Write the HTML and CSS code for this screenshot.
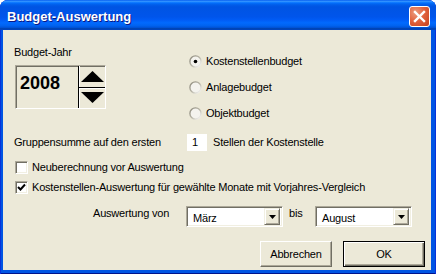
FILE: index.html
```html
<!DOCTYPE html>
<html lang="de">
<head>
<meta charset="utf-8">
<title>Budget-Auswertung</title>
<link rel="stylesheet" href="styles.css">
</head>
<body>
<div class="window">
  <div class="titlebar">
    <span class="title">Budget-Auswertung</span>
    <span class="close" aria-label="Schließen">
      <svg width="13" height="13" viewBox="0 0 13 13"><path d="M2 2 L11 11 M11 2 L2 11" stroke="#fff" stroke-width="2.4" stroke-linecap="square"/></svg>
    </span>
  </div>
  <div class="client">
    <div class="top">
      <div class="year">
        <div class="label">Budget-Jahr</div>
        <div class="spin">
          <div class="spin-value">2008</div>
          <div class="spin-btns">
            <div class="spin-btn"><svg width="23" height="11" viewBox="0 0 23 11"><polygon points="0,11 23,11 11.5,0" fill="#000"/></svg></div>
            <div class="spin-btn"><svg width="23" height="11" viewBox="0 0 23 11"><polygon points="0,0 23,0 11.5,11" fill="#000"/></svg></div>
          </div>
        </div>
      </div>
      <div class="radios">
        <div class="radio-row">
          <span class="radio"><svg width="13" height="13" viewBox="0 0 13 13"><defs><linearGradient id="rg" x1="0" y1="0" x2="1" y2="1"><stop offset="0" stop-color="#8a877a"/><stop offset="0.5" stop-color="#b7b4a6"/><stop offset="1" stop-color="#ffffff"/></linearGradient></defs><circle cx="6.5" cy="6.5" r="5.6" fill="#f4f3ee" stroke="url(#rg)" stroke-width="1.4"/><circle cx="6.5" cy="6.5" r="1.8" fill="#000"/></svg></span>
          <span>Kostenstellenbudget</span>
        </div>
        <div class="radio-row">
          <span class="radio"><svg width="13" height="13" viewBox="0 0 13 13"><circle cx="6.5" cy="6.5" r="5.6" fill="#f4f3ee" stroke="url(#rg)" stroke-width="1.4"/></svg></span>
          <span>Anlagebudget</span>
        </div>
        <div class="radio-row">
          <span class="radio"><svg width="13" height="13" viewBox="0 0 13 13"><circle cx="6.5" cy="6.5" r="5.6" fill="#f4f3ee" stroke="url(#rg)" stroke-width="1.4"/></svg></span>
          <span>Objektbudget</span>
        </div>
      </div>
    </div>
    <div class="group-row">
      <span class="group-label">Gruppensumme auf den ersten</span>
      <span class="field">1</span>
      <span>Stellen der Kostenstelle</span>
    </div>
    <div class="check-row first">
      <span class="check"></span>
      <span>Neuberechnung vor Auswertung</span>
    </div>
    <div class="check-row">
      <span class="check"><svg width="9" height="9" viewBox="0 0 9 9"><path d="M1 4 L3.5 6.5 L8 1.5" fill="none" stroke="#000" stroke-width="2"/></svg></span>
      <span>Kostenstellen-Auswertung für gewählte Monate mit Vorjahres-Vergleich</span>
    </div>
    <div class="range-row">
      <span class="range-label">Auswertung von</span>
      <div class="combo">
        <span class="combo-text">März</span>
        <span class="combo-btn"><svg width="7" height="4" viewBox="0 0 7 4"><polygon points="0,0 7,0 3.5,4" fill="#000"/></svg></span>
      </div>
      <span class="bis">bis</span>
      <div class="combo">
        <span class="combo-text">August</span>
        <span class="combo-btn"><svg width="7" height="4" viewBox="0 0 7 4"><polygon points="0,0 7,0 3.5,4" fill="#000"/></svg></span>
      </div>
    </div>
    <div class="buttons">
      <span class="btn cancel">Abbrechen</span>
      <span class="btn ok">OK</span>
    </div>
  </div>
</div>
</body>
</html>
```
FILE: styles.css
```css
html, body {
  margin: 0;
  padding: 0;
  background: #ffffff;
}

body {
  width: 436px;
  height: 274px;
  overflow: hidden;
  font-family: "Liberation Sans", Arial, sans-serif;
  font-size: 11px;
  letter-spacing: -0.2px;
  color: #000;
}

.window {
  width: 436px;
  height: 274px;
  display: flex;
  flex-direction: column;
  background: #0054e3;
  border-radius: 8px 8px 0 0;
  box-sizing: border-box;
  box-shadow: inset 1px 0 #0831d9, inset -1px 0 #0831d9, inset 0 -1px #00138c;
}

.titlebar {
  height: 30px;
  flex: none;
  display: flex;
  align-items: center;
  justify-content: space-between;
  padding: 0 6px 0 7px;
  border-radius: 8px 8px 0 0;
  background: linear-gradient(to bottom, #0058ee 0%, #3593ff 4%, #288eff 6%, #127dff 8%, #036ffc 10%, #0262ee 14%, #0057e5 20%, #0054e3 24%, #0055eb 56%, #005bf5 66%, #026afe 76%, #0062ef 86%, #0052d6 92%, #0040ab 96%, #0046c8 100%);
}

.title {
  color: #fff;
  font-family: "Liberation Sans", Arial, sans-serif;
  font-weight: bold;
  font-size: 13px;
  letter-spacing: 0;
  padding-top: 3px;
  text-shadow: 1px 1px #0a1883;
}

.close {
  width: 21px;
  height: 21px;
  box-sizing: border-box;
  margin-top: 2px;
  border: 1px solid #fff;
  border-radius: 3px;
  background: radial-gradient(circle at 30% 30%, #eb9c80 0%, #e2643f 45%, #c63f1b 100%);
  display: flex;
  align-items: center;
  justify-content: center;
}

.client {
  flex: 1;
  margin: 0 5px 4px 3px;
  background: #ece9d8;
  display: flex;
  flex-direction: column;
}

.top {
  display: flex;
  height: 96px;
}

.year {
  width: 174px;
  padding-left: 11px;
  padding-top: 16px;
}

.label {
  line-height: 13px;
}

.spin {
  margin-top: 6px;
  margin-left: 1px;
  width: 91px;
  height: 44px;
  box-sizing: border-box;
  display: flex;
  border: 1px solid;
  border-color: #aca899 #ffffff #ffffff #aca899;
  box-shadow: inset 1px 1px #716f64;
}

.spin-value {
  width: 62px;
  font-weight: bold;
  font-size: 18px;
  letter-spacing: 0;
  padding: 7px 0 0 4px;
  box-sizing: border-box;
}

.spin-btns {
  flex: 1;
  display: flex;
  flex-direction: column;
  border-left: 1px solid #000;
  box-shadow: inset 1px 0 #fff;
}

.spin-btn {
  flex: 1;
  display: flex;
  align-items: center;
  justify-content: center;
}

.spin-btn + .spin-btn {
  border-top: 1px solid #000;
  box-shadow: inset 0 1px #fff;
}

.radios {
  margin-top: 18px;
  margin-left: 1px;
}

.radio-row {
  height: 26px;
  display: flex;
  align-items: center;
  gap: 4px;
}

.radio {
  width: 13px;
  height: 13px;
  display: flex;
}

.group-row {
  margin-top: 7px;
  height: 18px;
  display: flex;
  align-items: center;
  padding-left: 11px;
}

.group-label {
  width: 173px;
}

.field {
  width: 20px;
  height: 17px;
  box-sizing: border-box;
  background: #fff;
  padding: 2px 0 0 5px;
  margin-right: 6px;
}

.check-row {
  height: 20px;
  display: flex;
  align-items: center;
  padding-left: 12px;
  gap: 4px;
}

.check-row.first {
  margin-top: 6px;
}

.check {
  width: 13px;
  height: 13px;
  box-sizing: border-box;
  background: #fff;
  border: 1px solid;
  border-color: #aca899 #ffffff #ffffff #aca899;
  box-shadow: inset 1px 1px #716f64, inset -1px -1px #f1efe2;
  display: flex;
  align-items: center;
  justify-content: center;
}

.range-row {
  margin-top: 9px;
  height: 21px;
  display: flex;
  align-items: flex-start;
  padding-left: 90px;
}

.range-label {
  width: 93px;
  line-height: 13px;
  margin-top: 1px;
}

.bis {
  width: 32px;
  padding-left: 6px;
  box-sizing: border-box;
  line-height: 13px;
  margin-top: 1px;
}

.combo {
  width: 97px;
  height: 21px;
  box-sizing: border-box;
  background: #fff;
  border: 1px solid;
  border-color: #aca899 #ffffff #ffffff #aca899;
  box-shadow: inset 1px 1px #716f64, inset -1px -1px #f1efe2;
  display: flex;
  align-items: center;
  padding: 2px;
}

.combo-text {
  flex: 1;
  padding-left: 4px;
  padding-top: 2px;
}

.combo-btn {
  width: 16px;
  height: 17px;
  box-sizing: border-box;
  background: #ece9d8;
  border: 1px solid;
  border-color: #f1efe2 #716f64 #716f64 #f1efe2;
  box-shadow: inset 1px 1px #fff, inset -1px -1px #aca899;
  display: flex;
  align-items: center;
  justify-content: center;
}

.buttons {
  margin-top: 14px;
  display: flex;
  padding-left: 257px;
  gap: 11px;
}

.btn {
  height: 26px;
  box-sizing: border-box;
  background: #ece9d8;
  display: flex;
  align-items: center;
  justify-content: center;
}

.cancel {
  width: 72px;
  border: 1px solid;
  border-color: #ffffff #716f64 #716f64 #ffffff;
  box-shadow: inset -1px -1px #aca899;
}

.ok {
  width: 82px;
  border: 1px solid #000;
  box-shadow: inset 1px 1px #fff, inset -1px -1px #716f64, inset -2px -2px #aca899;
}
```
